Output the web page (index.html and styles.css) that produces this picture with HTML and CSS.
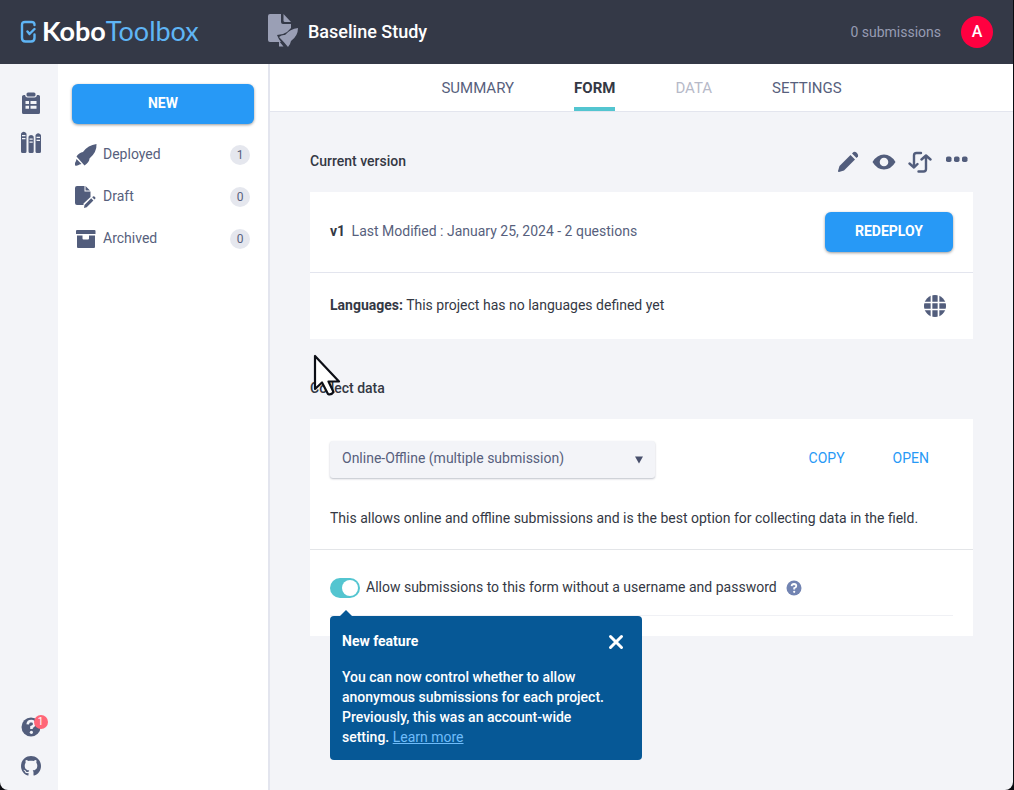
FILE: index.html
```html
<!DOCTYPE html>
<html lang="en">
<head>
<meta charset="utf-8">
<meta name="viewport" content="width=device-width, initial-scale=1">
<title>Baseline Study | KoboToolbox</title>
<link rel="stylesheet" href="styles.css">
</head>
<body>
<div class="app">
  <header class="topbar">
    <a class="logo" href="#" aria-label="KoboToolbox">
      <svg class="logo-mark" viewBox="0 0 16 24" fill="none" stroke="#5fb5f5" stroke-width="2.4" stroke-linecap="round" stroke-linejoin="round"><path d="M14.500 5Q14.500 2 11.500 2H5Q2 2 2 5V18Q2 21.500 5.500 21.500H11Q14.500 21.500 14.500 18V14.500"/><path d="M7.500 11.500L9.500 14L14.500 9"/></svg>
      <span class="logo-text"><span class="logo-kobo">Kobo</span><span class="logo-toolbox">Toolbox</span></span>
    </a>
    <div class="project">
      <svg class="project-icon" viewBox="0 0 30 34" fill="#9a9fb5"><path d="M2 0H13V8Q13 10 15 10H23V14Q20 18 15 20L9 21Q11 26 13 28H2Q0 28 0 26V2Q0 0 2 0Z"/><path d="M15.500 0L23 8H17Q15.500 8 15.500 6.500Z"/><path d="M30 14Q30 22 23 27Q22.500 30 20 33Q16 28 11 23Q14 20.500 17 21Q22 15 30 14Z"/><path d="M11 27L15.500 32.500H11Z"/></svg>
      <h1 class="project-name">Baseline Study</h1>
    </div>
    <span class="submissions">0 submissions</span>
    <button class="avatar" type="button">A</button>
  </header>
  <div class="body">
    <nav class="rail" aria-label="Main">
      <a class="rail-link" href="#" aria-label="Projects"><svg class="icon" viewBox="0 0 24 24"><path fill-rule="evenodd" d="M5 4H6Q6.500 6.500 8.500 6.500H15.500Q17.500 6.500 18 4H19.500Q21 4 21 5.500V21.500Q21 23 19.500 23H4.500Q3 23 3 21.500V5.500Q3 4 5 4ZM6.500 10V13H10V10ZM11.500 10V13H17.500V10ZM6.500 14.800V17.800H10V14.800ZM11.500 14.800V17.800H17.500V14.800Z"/><rect x="7.500" y="1.500" width="9" height="4" rx="1.500"/></svg></a>
      <a class="rail-link" href="#" aria-label="Library"><svg class="icon" viewBox="0 0 24 24"><path fill-rule="evenodd" d="M3 2.500Q4.500 1 6.500 2.500Q7.500 3 7.500 4V21.500Q7.500 23 6 23H3.500Q2 23 2 21.500V4Q2 3 3 2.500ZM3 5V6.200H6.500V5ZM3 8V9.200H6.500V8ZM10.500 5.500Q12 4.500 13.700 5.500Q14.700 6 14.700 7V21.500Q14.700 23 13.200 23H11Q9.500 23 9.500 21.500V7Q9.500 6 10.500 5.500ZM10.500 8.500V9.700H13.700V8.500ZM10.500 11.500V12.700H13.700V11.500ZM17.500 4Q19 2.700 21 4Q22 4.500 22 5.500V21.500Q22 23 20.500 23H18Q16.500 23 16.500 21.500V5.500Q16.500 4.500 17.500 4ZM17.500 6.700V7.900H21V6.700ZM17.500 9.700V10.900H21V9.700Z"/></svg></a>
      <a class="rail-link rail-help" href="#" aria-label="Help"><svg class="icon" viewBox="0 0 24 24"><circle cx="12" cy="12" r="9.500"/><path d="M8.700 9.300Q9 6 12.300 6Q15.300 6.200 15.300 9Q15.300 11 12.500 12V14" fill="none" stroke="#f2f4f9" stroke-width="2.600"/><circle cx="12.400" cy="17.300" r="1.600" fill="#f2f4f9"/></svg><span class="rail-badge">1</span></a>
      <a class="rail-link" href="#" aria-label="GitHub"><svg class="icon" viewBox="0 0 24 24"><path d="M12 2C6.400 2 2 6.500 2 12C2 16.500 4.900 20.300 8.800 21.600C9.400 21.700 9.500 21.300 9.500 21V19.100C6.700 19.700 6.100 17.900 6.100 17.900C5.700 16.700 5 16.400 5 16.400C4 15.800 5 15.800 5 15.800C6.100 15.900 6.700 16.900 6.700 16.900C7.600 18.500 9.100 18 9.600 17.700C9.700 17.100 10 16.600 10.300 16.400C8 16.100 5.700 15.300 5.700 11.400C5.700 10.300 6.100 9.400 6.700 8.700C6.600 8.400 6.300 7.400 6.800 6.100C6.800 6.100 7.700 5.800 9.500 7.100C11.100 6.600 12.900 6.600 14.500 7.100C16.300 5.800 17.200 6.100 17.200 6.100C17.700 7.400 17.400 8.400 17.300 8.700C17.900 9.400 18.300 10.300 18.300 11.400C18.300 15.300 16 16.100 13.700 16.400C14.100 16.700 14.500 17.300 14.500 18.200V21C14.500 21.300 14.700 21.700 15.300 21.600C19.200 20.300 22 16.500 22 12C22 6.500 17.600 2 12 2Z"/></svg></a>
    </nav>
    <aside class="drawer">
      <button class="btn btn-new" type="button">NEW</button>
      <nav class="filters" aria-label="Project status">
        <a class="filter" href="#"><svg class="icon" viewBox="0 0 24 24"><path d="M22.500 1Q23 9 15.500 15.500Q15.500 19 10.500 22.500L2.500 13.500Q5 9.500 9 9Q14 2 22.500 1Z"/><path d="M2.500 16L7.500 21L5.500 21.500Q4 23 1 22.500Q.5 19.500 2 18Z"/></svg><span class="filter-name">Deployed</span><span class="count">1</span></a>
        <a class="filter" href="#"><svg class="icon" viewBox="0 0 24 24"><path d="M3 1H10.500V6.500H16.500V12L9.500 18.500V20H3Q1 20 1 18V3Q1 1 3 1Z"/><path d="M11.500 1L16 5.500H11.500ZM17.200 13.200L19.400 15.500L12.700 22.300L10 23L10.500 20Z"/><path d="M18.200 12.200L19 11.500Q20 11 21 12Q22 13 21.200 13.800L20.400 14.500Z"/></svg><span class="filter-name">Draft</span><span class="count">0</span></a>
        <a class="filter" href="#"><svg class="icon" viewBox="0 0 24 24"><path d="M3 3H20.500Q21.500 3 21.500 4V7H2V4Q2 3 3 3ZM3 8.500H8.500V11.500Q8.500 12.500 9.500 12.500H14Q15 12.500 15 11.500V8.500H21V20Q21 21 20 21H4Q3 21 3 20Z"/></svg><span class="filter-name">Archived</span><span class="count">0</span></a>
      </nav>
    </aside>
    <main class="main">
      <nav class="tabs" aria-label="Project">
        <a class="tab" href="#">SUMMARY</a>
        <a class="tab tab-active" href="#" aria-current="page">FORM</a>
        <a class="tab tab-disabled" href="#" aria-disabled="true">DATA</a>
        <a class="tab" href="#">SETTINGS</a>
      </nav>
      <div class="content">
        <section class="section">
          <div class="section-head">
            <h2 class="section-title">Current version</h2>
            <div class="tools">
              <button class="tool" type="button" aria-label="Edit"><svg class="icon" viewBox="0 0 24 24"><path d="M14.500 5L19 9.500L8 20.500L3 22Q2 22.200 2 21L3.500 16Z"/><path d="M16 3.500L17.500 2Q19 1.300 21 3Q22.700 5 22 6.500L20.500 8Z"/></svg></button>
              <button class="tool" type="button" aria-label="Preview"><svg class="icon" viewBox="0 0 24 24"><path fill-rule="evenodd" d="M.5 12Q5 4.500 12 4.500T23.500 12Q19 19.500 12 19.500T.5 12ZM12 7.700A4.300 4.300 0 1 0 12 16.300A4.300 4.300 0 1 0 12 7.700Z"/></svg></button>
              <button class="tool" type="button" aria-label="Replace form"><svg class="icon icon-line" viewBox="0 0 24 24"><path d="M13 3H8.500Q6 3 6 5.500V17M1.500 13.500L6 17.500L9.500 14M10.500 21.500H15.500Q18 21.500 18 19V6M13.500 9.500L18 5.500L22.500 9.500"/></svg></button>
              <button class="tool" type="button" aria-label="More actions"><svg class="icon" viewBox="0 0 24 24"><rect x="2" y="6.500" width="5.500" height="5.500" rx="1.800"/><rect x="10" y="6.500" width="5.500" height="5.500" rx="1.800"/><rect x="18" y="6.500" width="5.500" height="5.500" rx="1.800"/></svg></button>
            </div>
          </div>
          <div class="card">
            <div class="row row-version">
              <p class="row-text"><b class="version-id">v1</b> <span>Last Modified : January 25, 2024 - 2 questions</span></p>
              <button class="btn btn-redeploy" type="button">REDEPLOY</button>
            </div>
            <div class="row row-languages">
              <p class="row-text"><b>Languages:</b> This project has no languages defined yet</p>
              <button class="tool" type="button" aria-label="Manage languages"><svg class="icon" viewBox="0 0 24 24"><circle cx="12" cy="12" r="11"/><path d="M8.500 0V24M15.500 0V24M0 8.500H24M0 15.500H24" stroke="#fff" stroke-width="1.700"/></svg></button>
            </div>
          </div>
        </section>
        <section class="section">
          <div class="section-head">
            <h2 class="section-title">Collect data</h2>
            <svg class="cursor" viewBox="0 0 30 44" aria-hidden="true"><path d="M3 3V36L10 29.500L16 41Q19 42.500 21.500 39L16.500 28.500H27Z" fill="#fff" stroke="#0c0e16" stroke-width="2.200" stroke-linejoin="round"/></svg>
          </div>
          <div class="card">
            <div class="collect">
              <div class="collect-controls">
                <span class="select">
                  <select class="select-box" aria-label="Collection method"><option>Online-Offline (multiple submission)</option></select>
                  <svg class="select-arrow" viewBox="0 0 8 8"><path d="M0 .5H8L4 7.500Z"/></svg>
                </span>
                <div class="links">
                  <button class="text-btn" type="button">COPY</button>
                  <a class="text-btn" href="#">OPEN</a>
                </div>
              </div>
              <p class="hint">This allows online and offline submissions and is the best option for collecting data in the field.</p>
            </div>
            <div class="anonymous">
              <div class="anonymous-row">
                <input class="toggle" type="checkbox" id="anonymous" checked>
                <label for="anonymous">Allow submissions to this form without a username and password</label>
                <a class="help" href="#" aria-label="Help"><svg class="help-icon" viewBox="0 0 16 16"><circle cx="8" cy="8" r="7.500" fill="#7284b2"/><path d="M5.600 6.200Q5.800 4 8 4Q10.300 4.100 10.300 6Q10.300 7.500 8.200 8.200V9.500" fill="none" stroke="#fff" stroke-width="1.800"/><circle cx="8.200" cy="11.800" r="1.100" fill="#fff"/></svg></a>
              </div>
              <div class="popover" role="dialog" aria-labelledby="popover-title">
                <div class="popover-head">
                  <h3 class="popover-title" id="popover-title">New feature</h3>
                  <button class="popover-close" type="button" aria-label="Close"><svg class="close-icon" viewBox="0 0 16 16"><path d="M2.500 2.500L13.500 13.500M13.500 2.500L2.500 13.500" stroke="#fff" stroke-width="3" stroke-linecap="round"/></svg></button>
                </div>
                <p class="popover-text">You can now control whether to allow anonymous submissions for each project. Previously, this was an account-wide setting. <a class="popover-link" href="#">Learn more</a></p>
              </div>
            </div>
          </div>
        </section>
      </div>
    </main>
  </div>
</div>
</body>
</html>
```
FILE: styles.css
```css
* {
  box-sizing: border-box;
}

body {
  margin: 0;
  background: #0a0b10;
  color: #343844;
  font: 14px/20px Roboto, sans-serif;
}

h1, h2, h3, p {
  margin: 0;
}

a {
  color: inherit;
  text-decoration: none;
}

button, select {
  border: 0;
  padding: 0;
  background: none;
  color: inherit;
  font: inherit;
  cursor: pointer;
}

svg {
  display: block;
}

b {
  font-weight: 700;
}

.app {
  display: flex;
  flex-direction: column;
  min-height: 100vh;
  margin-right: 1px;
  border-radius: 0 0 8px 8px;
  overflow: hidden;
  background: #f3f4f8;
}

.icon {
  width: 24px;
  height: 24px;
  fill: #525d7c;
}

.icon-line {
  fill: none;
  stroke: #525d7c;
  stroke-width: 2.4;
  stroke-linecap: round;
  stroke-linejoin: round;
}

/* Top bar */

.topbar {
  display: flex;
  align-items: center;
  height: 64px;
  padding: 0 20px;
  background: #343947;
}

.logo {
  display: flex;
  align-items: center;
  gap: 6px;
  width: 248px;
}

.logo-mark {
  width: 16px;
  height: 24px;
}

.logo-text {
  padding-bottom: 2px;
  color: #fff;
  font: 27px/32px Lato, sans-serif;
}

.logo-kobo {
  font-weight: 700;
}

.logo-toolbox {
  color: #5fb5f5;
}

.project {
  display: flex;
  flex: 1;
  align-items: center;
  gap: 10px;
}

.project-icon {
  width: 30px;
  height: 34px;
  margin-bottom: 3px;
}

.project-name {
  color: #fff;
  font-size: 18px;
  font-weight: 500;
}

.submissions {
  margin-right: 20px;
  padding-bottom: 1px;
  color: #979cb3;
}

.avatar {
  width: 32px;
  height: 32px;
  border-radius: 50%;
  background: #ff0040;
  color: #fff;
  font-size: 16px;
  font-weight: 500;
}

/* Side navigation */

.body {
  display: flex;
  flex: 1;
}

.rail {
  display: flex;
  flex-direction: column;
  align-items: center;
  gap: 15px;
  width: 58px;
  padding: 27px 0 12px 3px;
}

.rail-link {
  position: relative;
}

.rail-help {
  margin-top: auto;
}

.rail-badge {
  position: absolute;
  top: 0;
  right: -5px;
  width: 14px;
  height: 14px;
  border-radius: 50%;
  background: #ff6678;
  color: #fff;
  font-size: 10px;
  line-height: 14px;
  text-align: center;
}

.drawer {
  width: 212px;
  padding: 20px 14px;
  border-right: 2px solid #e3e5ee;
  background: #fff;
}

.btn {
  height: 40px;
  padding-bottom: 2px;
  border-radius: 6px;
  background: #2799f6;
  box-shadow: 0 1px 3px rgba(0, 0, 0, 0.4);
  color: #fff;
  font-weight: 700;
}

.btn-new {
  width: 100%;
}

.filters {
  display: flex;
  flex-direction: column;
  gap: 18px;
  padding: 19px 4px 0 2px;
}

.filter {
  display: flex;
  align-items: center;
  color: #575f7d;
}

.filter-name {
  flex: 1;
  margin: 0 5px;
  padding-bottom: 2px;
}

.count {
  width: 20px;
  height: 20px;
  border-radius: 50%;
  background: #e5e7ee;
  font-size: 12px;
  text-align: center;
}

/* Tabs */

.main {
  flex: 1;
  min-width: 0;
}

.tabs {
  display: flex;
  justify-content: center;
  gap: 60px;
  height: 48px;
  border-bottom: 1px solid #e3e5ee;
  background: #fff;
  color: #575f7d;
  font-size: 15px;
}

.tab {
  height: 47px;
  line-height: 48px;
}

.tab-active {
  border-bottom: 4px solid #53c5d0;
  color: #343844;
  font-weight: 700;
}

.tab-disabled {
  color: #b6b9c8;
}

/* Form page */

.content {
  padding: 29px 40px;
}

.section + .section {
  margin-top: 29px;
}

.section-head {
  position: relative;
  display: flex;
  align-items: center;
  justify-content: space-between;
  min-height: 40px;
  margin-bottom: 11px;
}

.section-title {
  font-size: 14px;
  font-weight: 500;
}

.tools {
  display: flex;
  gap: 12px;
  padding: 2px 5px 0 0;
}

.cursor {
  position: absolute;
  top: -15px;
  left: 2px;
  width: 30px;
  height: 44px;
}

.card {
  background: #fff;
}

.row {
  display: flex;
  align-items: center;
  justify-content: space-between;
  padding: 0 20px;
}

.row-text {
  padding-bottom: 2px;
}

.row-version {
  min-height: 80px;
  color: #575f7d;
}

.row-languages {
  min-height: 67px;
  padding-right: 26px;
  border-top: 1px solid #e3e5ee;
}

.version-id {
  margin-right: 3px;
  color: #343844;
}

.btn-redeploy {
  width: 128px;
}

.collect {
  padding: 22px 20px 21px;
  border-bottom: 1px solid #e3e5e8;
}

.collect-controls {
  display: flex;
  align-items: center;
  justify-content: space-between;
  margin-bottom: 30px;
}

.select {
  display: grid;
  flex: 0 1 325px;
  align-items: center;
}

.select-box {
  grid-area: 1 / 1;
  width: 100%;
  height: 37px;
  padding: 0 32px 3px 12px;
  border-radius: 3px;
  appearance: none;
  background: #f3f4f8;
  box-shadow: 0 1px 2px rgba(40, 50, 80, 0.3);
  color: #575f7d;
}

.select-arrow {
  grid-area: 1 / 1;
  justify-self: end;
  width: 8px;
  height: 8px;
  margin-right: 12px;
  fill: #48506c;
  pointer-events: none;
}

.links {
  display: flex;
  gap: 48px;
  padding: 0 24px 3px 0;
}

.text-btn {
  color: #2799f6;
}

.anonymous {
  position: relative;
  padding: 0 20px 20px;
}

.anonymous-row {
  display: flex;
  align-items: flex-start;
  height: 66px;
  padding-top: 27px;
  border-bottom: 1px solid #f0f1f5;
}

.toggle {
  display: flex;
  align-items: center;
  justify-content: flex-end;
  width: 30px;
  height: 20px;
  margin: 1px 6px 0 0;
  padding: 2px;
  border-radius: 10px;
  appearance: none;
  background: #53c5d0;
}

.toggle::before {
  width: 16px;
  height: 16px;
  border-radius: 50%;
  background: #fff;
  content: "";
}

.toggle:not(:checked) {
  justify-content: flex-start;
  background: #b6b9c8;
}

.help {
  margin: 3px 0 0 9px;
}

.help-icon {
  width: 16px;
  height: 16px;
}

.popover {
  position: absolute;
  top: 66px;
  left: 20px;
  width: 312px;
  padding: 13px 18px 13px 12px;
  border-radius: 4px;
  background: #065896;
  color: #fff;
}

.popover::before {
  position: absolute;
  top: -6px;
  left: 10px;
  border: 6px solid transparent;
  border-top: 0;
  border-bottom-color: #065896;
  content: "";
}

.popover-head {
  display: flex;
  align-items: center;
  justify-content: space-between;
  height: 24px;
  margin-bottom: 14px;
}

.popover-title {
  font-size: 14px;
  font-weight: 700;
}

.popover-close {
  padding: 3px 0 1px;
}

.close-icon {
  width: 16px;
  height: 16px;
}

.popover-text {
  padding-right: 8px;
  font-weight: 500;
}

.popover-link {
  color: #6fbcfa;
  font-weight: 400;
  text-decoration: underline;
}
```
